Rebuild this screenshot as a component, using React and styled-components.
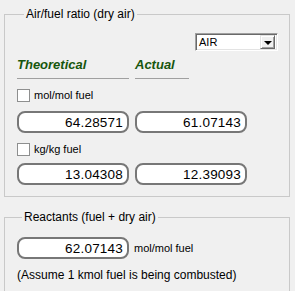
import styled, { createGlobalStyle } from "styled-components"

const Global = createGlobalStyle`
    html, body {
        margin: 0;
        padding: 0;
        background-color: #f0f0f0;
    }
    body {
        font-family: 'Liberation Sans', Arial, sans-serif;
        color: #000;
    }
`

function CheckRow({ label }) {
    return (
        <CheckLine>
            <Box />
            <span>{label}</span>
        </CheckLine>
    )
}

export default function App() {
    return (
        <Page>
            <Global />
            <Group $gap={7}>
                <legend>Air/fuel ratio (dry air)</legend>
                <SelectRow>
                    <Select>
                        <span>AIR</span>
                        <DropButton>
                            <Arrow />
                        </DropButton>
                    </Select>
                </SelectRow>
                <Columns>
                    <Heading>Theoretical</Heading>
                    <Heading $short>Actual</Heading>
                </Columns>
                <CheckRow label="mol/mol fuel" />
                <Columns $top={9}>
                    <Field>64.28571</Field>
                    <Field>61.07143</Field>
                </Columns>
                <CheckRow label="kg/kg fuel" />
                <Columns $top={7}>
                    <Field>13.04308</Field>
                    <Field>12.39093</Field>
                </Columns>
            </Group>
            <Group $gap={5} $bottom={9}>
                <legend>Reactants (fuel + dry air)</legend>
                <FieldLine>
                    <Field>62.07143</Field>
                    <Unit>mol/mol fuel</Unit>
                </FieldLine>
                <Note>(Assume 1 kmol fuel is being combusted)</Note>
            </Group>
        </Page>
    )
}

const Page = styled.div`
    width: 295px;
    height: 291px;
    box-sizing: border-box;
    padding: 7px 5px 0 4px;
    display: flex;
    flex-direction: column;
    gap: 13px;
    overflow: hidden;
`
const Group = styled.fieldset`
    margin: 0;
    padding: 0 11px ${(p) => p.$bottom ?? 11}px 12px;
    border: 1px solid #c9c9c9;
    border-radius: 0;
    display: flex;
    flex-direction: column;
    min-width: 0;

    legend {
        margin-left: ${(p) => p.$gap}px;
        padding: 0 2px;
        font-size: 12px;
        line-height: 14px;
        color: #000;
    }
`
const SelectRow = styled.div`
    display: flex;
    justify-content: flex-end;
    margin-top: 12px;
`
const Select = styled.div`
    width: 83px;
    height: 18px;
    box-sizing: border-box;
    background-color: #fff;
    border-top: 1px solid #a0a0a0;
    border-left: 1px solid #a0a0a0;
    border-right: 1px solid #fff;
    border-bottom: 1px solid #fff;
    box-shadow: inset 1px 1px 0 #696969, inset -1px -1px 0 #e3e3e3;
    display: flex;
    align-items: center;
    justify-content: space-between;
    padding: 2px;
    font-size: 11px;

    span {
        padding-left: 1px;
    }
`
const DropButton = styled.div`
    width: 15px;
    height: 14px;
    box-sizing: border-box;
    background-color: #f0f0f0;
    border-top: 1px solid #e3e3e3;
    border-left: 1px solid #e3e3e3;
    border-right: 1px solid #696969;
    border-bottom: 1px solid #696969;
    box-shadow: inset 1px 1px 0 #fff, inset -1px -1px 0 #a0a0a0;
    display: flex;
    align-items: center;
    justify-content: center;
`
const Arrow = styled.div`
    width: 0;
    height: 0;
    border-left: 4px solid transparent;
    border-right: 4px solid transparent;
    border-top: 4px solid #000;
    margin-top: 1px;
`
const Columns = styled.div`
    display: grid;
    grid-template-columns: 112px 112px;
    column-gap: 6px;
    margin-top: ${(p) => p.$top ?? 6}px;
`
const Heading = styled.div`
    width: ${(p) => (p.$short ? "54px" : "112px")};
    font-size: 13px;
    line-height: 16px;
    font-weight: bold;
    font-style: italic;
    color: #17560d;
    padding-bottom: 5px;
    border-bottom: 1px solid #a0a0a0;
`
const CheckLine = styled.div`
    display: flex;
    align-items: center;
    gap: 4px;
    height: 13px;
    margin-top: 10px;
    font-size: 11px;
    line-height: 13px;
`
const Box = styled.div`
    width: 13px;
    height: 13px;
    box-sizing: border-box;
    background-color: #fff;
    border: 1px solid #8e8f8f;
`
const Field = styled.div`
    width: 112px;
    height: 22px;
    box-sizing: border-box;
    background-color: #fff;
    border: 2px solid #777;
    border-radius: 8px;
    padding-right: 4px;
    display: flex;
    align-items: center;
    justify-content: flex-end;
    font-size: 13.5px;
    letter-spacing: 0.2px;
`
const FieldLine = styled.div`
    display: flex;
    align-items: center;
    gap: 5px;
    margin-top: 13px;
`
const Unit = styled.span`
    font-size: 11px;
`
const Note = styled.div`
    margin-top: 9px;
    font-size: 12px;
    line-height: 14px;
`
